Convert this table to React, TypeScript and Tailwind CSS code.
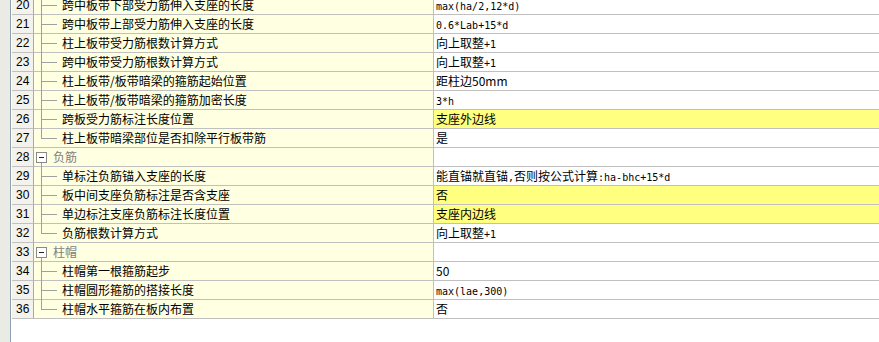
import React from 'react';

type Row = {
  no: number;
  name: string;
  value?: React.ReactNode;
  group?: boolean;
  hl?: boolean;
  tree?: 'mid' | 'last';
};

const mono = (s: string) => (
  <span className="font-['DejaVu_Sans_Mono',monospace] text-[10px]">{s}</span>
);

const rows: Row[] = [
  { no: 20, name: '跨中板带下部受力筋伸入支座的长度', value: mono('max(ha/2,12*d)'), tree: 'mid' },
  { no: 21, name: '跨中板带上部受力筋伸入支座的长度', value: mono('0.6*Lab+15*d'), tree: 'mid' },
  { no: 22, name: '柱上板带受力筋根数计算方式', value: <>向上取整{mono('+1')}</>, tree: 'mid' },
  { no: 23, name: '跨中板带受力筋根数计算方式', value: <>向上取整{mono('+1')}</>, tree: 'mid' },
  { no: 24, name: '柱上板带/板带暗梁的箍筋起始位置', value: '距柱边50mm', tree: 'mid' },
  { no: 25, name: '柱上板带/板带暗梁的箍筋加密长度', value: mono('3*h'), tree: 'mid' },
  { no: 26, name: '跨板受力筋标注长度位置', value: '支座外边线', hl: true, tree: 'mid' },
  { no: 27, name: '柱上板带暗梁部位是否扣除平行板带筋', value: '是', tree: 'last' },
  { no: 28, name: '负筋', group: true },
  {
    no: 29,
    name: '单标注负筋锚入支座的长度',
    value: <>能直锚就直锚{mono(',')}否则按公式计算{mono(':ha-bhc+15*d')}</>,
    tree: 'mid',
  },
  { no: 30, name: '板中间支座负筋标注是否含支座', value: '否', hl: true, tree: 'mid' },
  { no: 31, name: '单边标注支座负筋标注长度位置', value: '支座内边线', hl: true, tree: 'mid' },
  { no: 32, name: '负筋根数计算方式', value: <>向上取整{mono('+1')}</>, tree: 'last' },
  { no: 33, name: '柱帽', group: true },
  { no: 34, name: '柱帽第一根箍筋起步', value: '50', tree: 'mid' },
  { no: 35, name: '柱帽圆形箍筋的搭接长度', value: mono('max(lae,300)'), tree: 'mid' },
  { no: 36, name: '柱帽水平箍筋在板内布置', value: '否', tree: 'last' },
];

function NameCell({ row }: { row: Row }) {
  if (row.group) {
    return (
      <div className="relative w-[400px] shrink-0 bg-[#ffffe1] border-r border-b border-[#c0c0c0]">
        <div className="absolute left-[2px] top-[4px] w-[11px] h-[11px] border border-[#8a8a8a] bg-white flex items-center justify-center">
          <div className="w-[5px] h-px bg-[#222]" />
        </div>
        <div className="absolute left-[7px] top-[15px] bottom-[-1px] w-px bg-[#a0a0a0]" />
        <span className="pl-[19px] text-[#808080]">{row.name}</span>
      </div>
    );
  }
  return (
    <div className="relative w-[400px] shrink-0 bg-[#ffffe1] border-r border-b border-[#c0c0c0]">
      <div
        className={
          row.tree === 'last'
            ? 'absolute left-[7px] top-0 h-[10px] w-px bg-[#a0a0a0]'
            : 'absolute left-[7px] top-0 bottom-[-1px] w-px bg-[#a0a0a0]'
        }
      />
      <div className="absolute left-[8px] top-[9px] w-[15px] h-px bg-[#a0a0a0]" />
      <span className="pl-[28px]">{row.name}</span>
    </div>
  );
}

export default function App() {
  return (
    <div className="w-[879px] h-[342px] overflow-hidden bg-white flex font-['Noto_Sans_CJK_SC',sans-serif] text-[12px] leading-[18px] text-black">
      <div className="w-[10px] shrink-0 bg-[#ebebe6]" />
      <div className="w-px shrink-0 bg-[#8fa0b6]" />
      <div className="w-px shrink-0 bg-white" />
      <div className="flex-1 flex flex-col -mt-[4px]">
        {rows.map((row) => (
          <div key={row.no} className="flex h-[19px] shrink-0">
            <div className="w-[22px] shrink-0 bg-[#f3f2ec] border-r border-b border-r-[#a8a8a8] border-b-[#c0c0c0] pl-[4px] font-['Liberation_Sans',sans-serif] text-[12px]">
              {row.no}
            </div>
            <NameCell row={row} />
            <div
              className={
                row.hl
                  ? 'flex-1 pl-[2px] bg-[#ffff80] border-b border-[#c0c0c0] whitespace-nowrap'
                  : 'flex-1 pl-[2px] bg-white border-b border-[#c0c0c0] whitespace-nowrap'
              }
            >
              {row.value}
            </div>
          </div>
        ))}
      </div>
    </div>
  );
}
